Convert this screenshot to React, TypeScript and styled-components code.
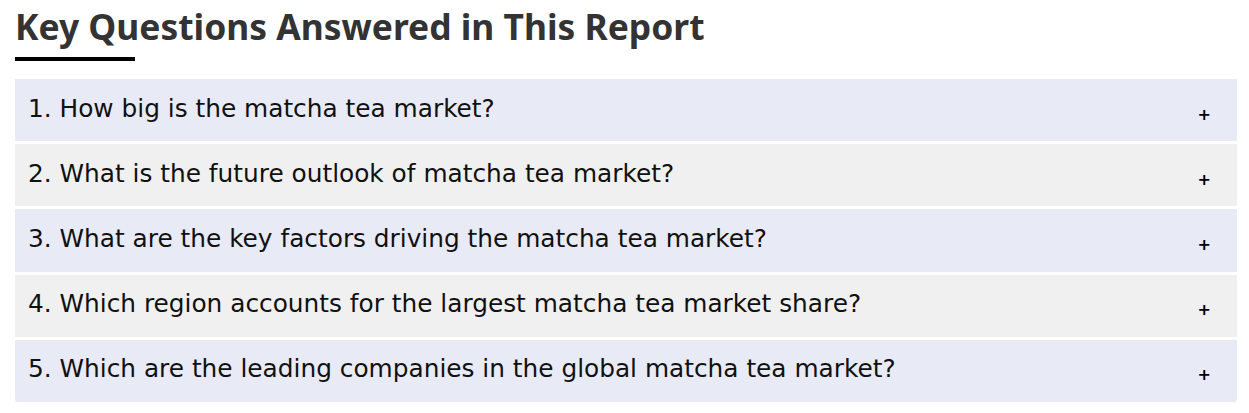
import React from "react";
import styled, { createGlobalStyle } from "styled-components";

const GlobalStyle = createGlobalStyle`
  body {
    margin: 0;
    background: #ffffff;
    font-family: "DejaVu Sans", "Noto Sans", sans-serif;
  }
`;

const questions = [
  "1. How big is the matcha tea market?",
  "2. What is the future outlook of matcha tea market?",
  "3. What are the key factors driving the matcha tea market?",
  "4. Which region accounts for the largest matcha tea market share?",
  "5. Which are the leading companies in the global matcha tea market?",
];

function App() {
  return (
    <>
      <GlobalStyle />
      <Section>
        <Title>Key Questions Answered in This Report</Title>
        <TitleBar />
        <List>
          {questions.map((q, i) => (
            <Row key={q} $alt={i % 2 === 1}>
              <Question>{q}</Question>
              <Plus>+</Plus>
            </Row>
          ))}
        </List>
      </Section>
    </>
  );
}

const Section = styled.section`
  padding: 0 12px 0 15px;
  display: flex;
  flex-direction: column;
`;

const Title = styled.h2`
  margin: 4px 0 0;
  font-family: "Noto Sans", "DejaVu Sans", sans-serif;
  font-size: 35.4px;
  line-height: 44px;
  font-weight: 700;
  color: #333333;
`;

const TitleBar = styled.div`
  width: 120px;
  height: 4px;
  margin-top: 9px;
  background: #000000;
`;

const List = styled.div`
  margin-top: 18px;
  display: flex;
  flex-direction: column;
  gap: 3px;
  border-radius: 0 0 3px 3px;
  overflow: hidden;
`;

const Row = styled.div<{ $alt: boolean }>`
  height: 62.2px;
  display: flex;
  align-items: center;
  justify-content: space-between;
  padding: 0 26px 0 13px;
  background: ${(p) => (p.$alt ? "#f0f0f0" : "#e8eaf6")};
`;

const Question = styled.span`
  font-size: 24.8px;
  color: #111111;
  margin-top: -4px;
`;

const Plus = styled.span`
  font-size: 16px;
  font-weight: 700;
  color: #000000;
  margin-top: 8px;
`;

export default App;
